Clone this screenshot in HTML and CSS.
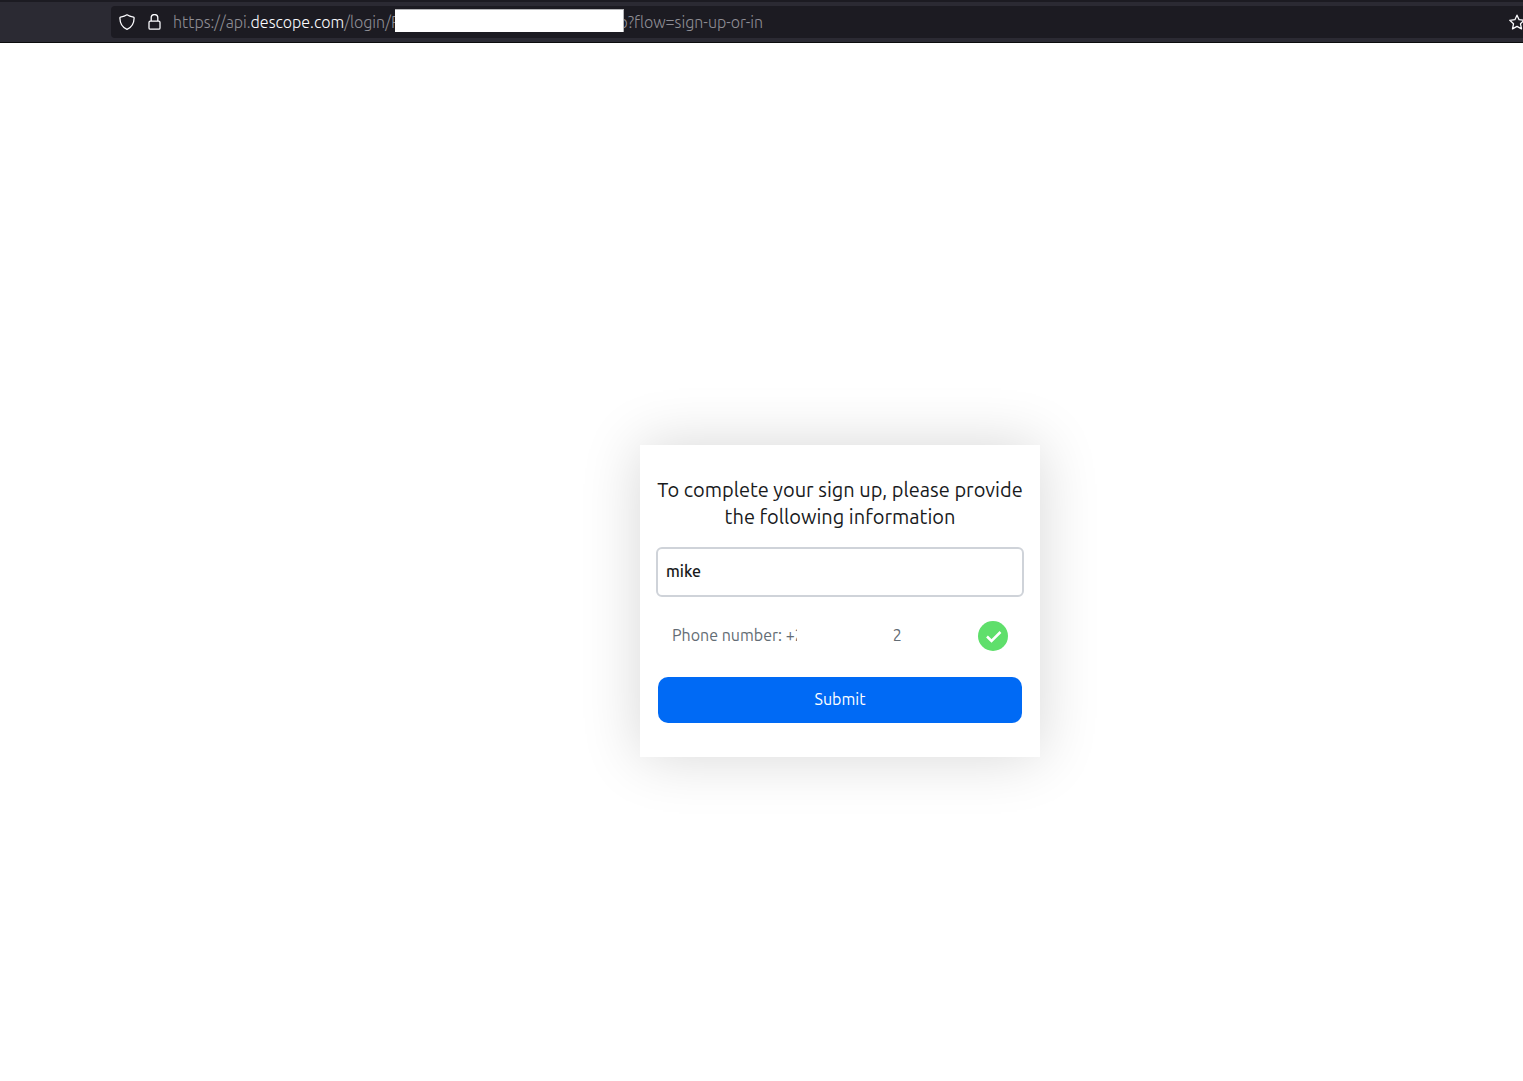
FILE: index.html
```html
<!DOCTYPE html>
<html lang="en">

<head>
    <meta charset="UTF-8">
    <meta name="viewport" content="width=device-width, initial-scale=1.0">
    <title>Sign up or in</title>
    <link rel="stylesheet" href="styles.css">
</head>

<body>

    <header class="toolbar">
        <div class="urlbar">
            <svg class="icon" viewBox="0 0 16 16" aria-hidden="true">
                <path d="M8 .8C6 2.100 3.600 2.700 1.500 3.100C1 3.300 .8 3.600 .9 4.200C1 8.800 3 13.200 8 15.300C13 13.200 15 8.800 15.100 4.200C15.200 3.600 15 3.300 14.500 3.100C12.400 2.700 10 2.100 8 .8Z" />
            </svg>
            <svg class="icon" viewBox="0 0 16 16" aria-hidden="true">
                <rect x="3" y="7.200" width="11" height="8" rx="1.300" />
                <path d="M5.200 7V3.800a3.300 3.300 0 0 1 6.600 0V7" />
            </svg>
            <div class="url">
                <span>https://api.<b>descope.com</b>/login/</span>
                <span class="cut">P</span>
                <span class="redacted"></span>
                <span class="cut cut-start">o</span>
                <span>?flow=sign-up-or-in</span>
            </div>
            <button type="button" class="star" aria-label="Bookmark this page">
                <svg class="icon" viewBox="0 0 16 16" aria-hidden="true">
                    <path d="M8 1.200L10.100 5.700L15.200 6.300L11.500 9.800L12.500 14.900L8 12.400L3.500 14.900L4.500 9.800L.8 6.300L5.900 5.700Z" />
                </svg>
            </button>
        </div>
    </header>

    <main class="page">
        <form class="card">
            <h1>To complete your sign up, please provide the following information</h1>

            <input type="text" class="name" value="mike" aria-label="Name">

            <div class="phone">
                <span>Phone number: +</span>
                <span class="digit-cut">2</span>
                <span class="hidden-digits"></span>
                <span>2</span>
                <svg class="verified" viewBox="0 0 30 30" role="img" aria-label="Verified">
                    <circle cx="15" cy="15" r="15" />
                    <path d="M9 15.500L13.500 20L22.500 11" />
                </svg>
            </div>

            <button type="button" class="submit">Submit</button>
        </form>
    </main>

</body>

</html>
```

FILE: styles.css
```css
* {
    box-sizing: border-box;
}

body {
    margin: 0;
    min-height: 100vh;
    display: flex;
    flex-direction: column;
    background-color: #fff;
    font-family: Ubuntu, "Noto Sans", "Open Sans", sans-serif;
    font-size: 16px;
}

/* browser toolbar */
.toolbar {
    padding: 4px 0 4px 111px;
    border-top: 2px solid #1c1b22;
    border-bottom: 1px solid #0c0c0d;
    background-color: #2b2a33;
}

.urlbar {
    height: 32px;
    display: flex;
    align-items: center;
    gap: 11px;
    padding-left: 8px;
    border-radius: 4px 0 0 4px;
    background-color: #1c1b22;
    overflow: hidden;
}

.icon {
    display: block;
    flex: none;
    width: 16px;
    height: 16px;
    fill: none;
    stroke: #fbfbfe;
    stroke-width: 1.3;
    stroke-linejoin: round;
}

.url {
    flex: 1;
    display: flex;
    align-items: center;
    padding-bottom: 3px;
    color: #8f8e95;
    font-size: 16px;
    font-weight: 300;
    line-height: 20px;
    white-space: nowrap;
}

.url span {
    padding-top: 2px;
}

.url b {
    color: #fbfbfe;
    font-weight: 300;
}

.cut {
    display: flex;
    width: 4px;
    overflow: hidden;
}

.cut-start {
    justify-content: flex-end;
}

.redacted {
    width: 229px;
    height: 23px;
    border-top: 1px solid #b5b5b8;
    border-right: 1px solid #b5b5b8;
    background-color: #fff;
}

.star {
    flex: none;
    margin-right: -2px;
    padding: 0;
    border: 0;
    background: none;
}

/* sign up form */
.page {
    flex: 1;
    display: flex;
    align-items: center;
    justify-content: center;
    padding: 78px 0 0 157px;
}

.card {
    width: 400px;
    padding: 31px 16px 34px;
    background-color: #fff;
    box-shadow: 0 0 56px rgba(0, 0, 0, .16);
}

h1 {
    margin: 0 0 17px;
    color: #181a1c;
    font-size: 20px;
    font-weight: 400;
    line-height: 27px;
    text-align: center;
}

.name {
    display: block;
    width: 100%;
    height: 50px;
    padding: 0 8px 2px;
    border: 2px solid #cfd3d9;
    border-radius: 6px;
    background-color: #fff;
    color: #181a1c;
    font: 500 16px Ubuntu, "Noto Sans", "Open Sans", sans-serif;
    outline: none;
}

.phone {
    display: flex;
    align-items: center;
    margin: 24px 16px 26px;
    color: #636c74;
    line-height: 28px;
    white-space: nowrap;
}

.phone span {
    padding-bottom: 2px;
}

.digit-cut {
    width: 2px;
    overflow: hidden;
}

.hidden-digits {
    width: 96px;
}

.verified {
    width: 30px;
    height: 30px;
    margin-left: auto;
    fill: #5fdf6b;
}

.verified path {
    fill: none;
    stroke: #fff;
    stroke-width: 2.5;
}

.submit {
    display: block;
    width: calc(100% - 4px);
    height: 46px;
    margin: 0 2px;
    padding: 0 0 2px;
    border: 0;
    border-radius: 10px;
    background-color: #006af5;
    color: #fff;
    font: 16px Ubuntu, "Noto Sans", "Open Sans", sans-serif;
}
```
